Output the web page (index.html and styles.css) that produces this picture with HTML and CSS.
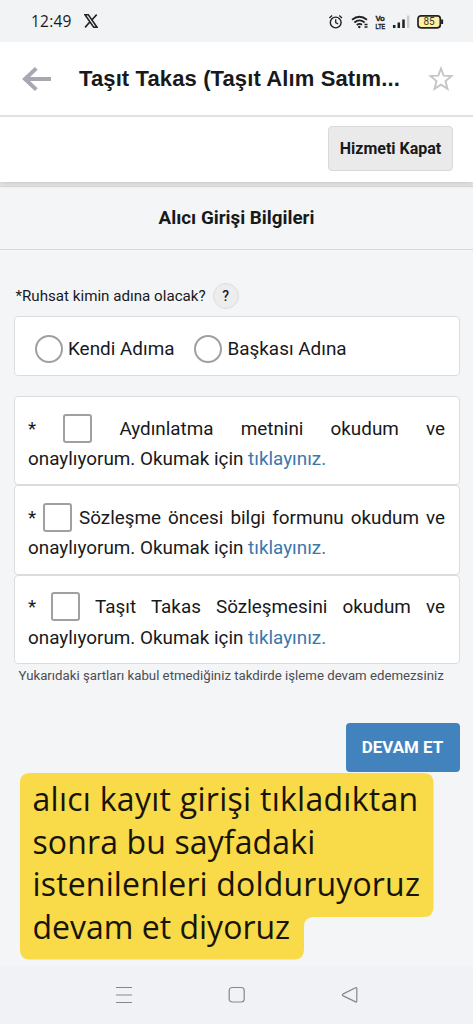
FILE: index.html
```html
<!DOCTYPE html>
<html lang="tr">
<head>
<meta charset="utf-8">
<meta name="viewport" content="width=device-width">
<title>Taşıt Takas</title>
<link rel="stylesheet" href="styles.css">
</head>
<body>
<div class="screen">
  <div class="status">
    <span class="clock">12:49</span>
    <svg class="x-logo" width="14" height="14" viewBox="0 0 14 14" fill="none" stroke="#222"><path d="M1 .8h3.3l8.7 12.400H9.700z" stroke-width="1.500"/><path d="M12.700.6 7.800 6M6 7.800 1.100 13.400" stroke-width="1.600"/></svg>
    <svg class="status-icons" width="116" height="18" viewBox="0 0 116 18" fill="none" stroke="#202124">
      <circle cx="7.700" cy="9.500" r="5.400" stroke-width="1.400"/>
      <path d="M7.700 6.200v3.500l2.500 1.300M1.400 5l2.700-2.400M14 5l-2.700-2.400" stroke-width="1.300"/>
      <path d="M24 6.800q7.500-6 15 0M26.400 9.500q5.100-4.200 10.200 0M28.800 12q2.700-2.200 5.200-.3" stroke-width="1.800"/>
      <circle cx="31.300" cy="14" r="1.200" fill="#202124" stroke="none"/>
      <path d="M36.500 11.500h3M36.500 14h3" stroke-width="1.500"/>
      <g fill="#202124" stroke="#202124" stroke-width=".3" class="volte"><text x="47.400" y="8" textLength="9.500" lengthAdjust="spacingAndGlyphs">Vo</text><text x="47.400" y="15.600" textLength="9.800" lengthAdjust="spacingAndGlyphs">LTE</text></g>
      <path d="M66.200 15v-3M70.800 15V9.500M75.500 15V6.500" stroke-width="2.500"/><path d="M80.200 15V2.500" stroke="#c9cacc" stroke-width="2.300"/>
      <rect x="90" y="2.800" width="22.300" height="12" rx="3" fill="#fff0a3" stroke-width="1.700"/>
      <path d="M114.100 6.500v4.500" stroke-width="2"/>
      <text x="101.100" y="12.400" text-anchor="middle" fill="#383725" stroke="none" class="battery">85</text>
    </svg>
  </div>
  <header class="header">
    <svg class="back" width="30" height="26" viewBox="0 0 30 26" fill="none" stroke="#aaa7b2" stroke-width="4"><path d="M29 13H3M14.300 2.400 3 13l11.300 10.600"/></svg>
    <h1><span>Taşıt Takas (Taşıt Alım Satım...</span></h1>
    <svg class="star" width="26" height="26" viewBox="0 0 26 26" fill="none" stroke="#c5c6c8" stroke-width="1.900"><path d="m13 2.500 2.700 7.200 7.900.4-6.100 5 2 7.800-6.500-4.300-6.500 4.300 2-7.800-6.100-5 7.900-.4z"/></svg>
  </header>
  <div class="toolbar"><button class="close"><span>Hizmeti Kapat</span></button></div>
  <h2 class="section-title"><span>Alıcı Girişi Bilgileri</span></h2>
  <main class="form">
    <div class="question"><span class="question-text">*Ruhsat kimin adına olacak?</span><span class="help">?</span></div>
    <div class="card options">
      <label class="option first"><i class="radio"></i><span>Kendi Adıma</span></label>
      <label class="option"><i class="radio"></i><span>Başkası Adına</span></label>
    </div>
    <div class="agreements">
      <div class="card agreement"><p class="justified">* <i class="checkbox"></i> Aydınlatma metnini okudum ve</p><p><span>onaylıyorum. Okumak için <a>tıklayınız.</a></span></p></div>
      <div class="card agreement"><p class="justified">* <i class="checkbox"></i> Sözleşme öncesi bilgi formunu okudum ve</p><p><span>onaylıyorum. Okumak için <a>tıklayınız.</a></span></p></div>
      <div class="card agreement"><p class="justified">* <i class="checkbox"></i> Taşıt Takas Sözleşmesini okudum ve</p><p><span>onaylıyorum. Okumak için <a>tıklayınız.</a></span></p></div>
    </div>
    <p class="note"><span>Yukarıdaki şartları kabul etmediğiniz takdirde işleme devam edemezsiniz</span></p>
    <button class="continue"><span>DEVAM ET</span></button>
  </main>
  <div class="callout">
    <svg class="callout-shape" width="414" height="188" viewBox="0 0 414 188"><path fill="#f9da49" d="M10 0H403.500q10 0 10 10V134q0 10-10 10H294q-10 0-10 10v22.500q0 10-10 10H10q-10 0-10-10V10Q0 0 10 0z"/></svg>
    <div class="callout-text">
      <div><span class="l1">alıcı kayıt girişi tıkladıktan</span></div>
      <div><span class="l2">sonra bu sayfadaki</span></div>
      <div><span class="l3">istenilenleri dolduruyoruz</span></div>
      <div><span class="l4">devam et diyoruz</span></div>
    </div>
  </div>
  <nav class="nav">
    <svg width="18" height="18" viewBox="0 0 18 18" stroke="#858789"><path d="M1 1.500h16M1 9h16M1 16.500h16" stroke-width="1.200"/></svg>
    <svg width="18" height="18" viewBox="0 0 18 18" fill="none" stroke="#858789" stroke-width="1.200"><rect x="1.200" y="1.500" width="15" height="14.500" rx="3"/></svg>
    <svg width="18" height="18" viewBox="0 0 18 18" fill="none" stroke="#858789" stroke-width="1.200"><path d="M14.600 1.800 2.200 7.900q-1.800 1 0 2l12.400 6q1.200.5 1.200-.8V2.500q0-1.200-1.200-.7z"/></svg>
  </nav>
</div>
</body>
</html>
```
FILE: styles.css
```css
* { box-sizing: border-box; }
body { margin: 0; background: #f4f5f7; color: #18191b; font-family: Roboto, sans-serif; }
h1, h2, p { margin: 0; }
button { font-family: inherit; padding: 0; }
.screen { position: relative; width: 473px; height: 1024px; display: flex; flex-direction: column; overflow: hidden; }
.status { height: 42px; flex: none; background: #f2f3f5; display: flex; align-items: center; padding: 0 29px 0 31px; }
.clock { font: 15.500px "Open Sans", sans-serif; letter-spacing: .2px; }
.x-logo { margin-left: 12px; }
.status-icons { margin-left: auto; margin-top: 2px; }
.volte { font: bold 8px "Liberation Sans", sans-serif; }
.battery { font: 10px Roboto, sans-serif; }
.header { height: 75px; flex: none; background: #fff; border-bottom: 2px solid #e3e4e6; display: flex; align-items: center; padding: 0 19px 0 22px; }
.back { flex: none; }
.header h1 { flex: 1; margin-left: 27px; font: bold 22px/26px "Liberation Sans", sans-serif; letter-spacing: .12px; white-space: nowrap; }
.toolbar { height: 65px; flex: none; background: #fff; display: flex; justify-content: flex-end; padding: 9px 20px 0; box-shadow: 0 2px 5px #ccc; position: relative; }
.close { width: 125px; height: 45px; border: 1px solid #d9d9d9; border-radius: 4px; background: #eaeaea; font-size: 16px; font-weight: 700; color: #18191b; }
.section-title { height: 68px; flex: none; padding-top: 4px; border-bottom: 1px solid #d7d9db; display: flex; align-items: center; justify-content: center; font-size: 18.800px; font-weight: 700; background: linear-gradient(#e6e7e8 0 4px, #d3d4d5 4px 5px, #f4f5f7 5px); }
.form { padding: 32px 13.500px 0 13.500px; display: flex; flex-direction: column; }
.question { height: 27px; display: flex; align-items: center; gap: 7px; padding-left: 2px; font-size: 15.150px; }
.help { width: 26px; height: 26px; border: 1px solid #dcddde; border-radius: 50%; background: #ededee; text-align: center; line-height: 24px; font-size: 14px; font-weight: 500; }
.card { background: #fff; border: 1px solid #dadcde; border-radius: 4px; }
.options { height: 60px; margin-top: 7px; display: flex; align-items: center; padding: 5px 0 0 20px; font-size: 18.900px; }
.option { display: flex; align-items: center; gap: 5.500px; white-space: nowrap; }
.option.first { width: 159.500px; }
.radio { width: 28px; height: 28px; flex: none; border: 2px solid #a0a0a0; border-radius: 50%; }
.agreements { margin-top: 20px; display: flex; flex-direction: column; }
.agreement { height: 89.300px; padding: 16.500px 13.500px 0 13.500px; font-size: 18.880px; line-height: 30px; }
.agreement p { height: 30.500px; white-space: nowrap; }
.agreement .justified { text-align: justify; text-align-last: justify; white-space: normal; }
.checkbox { display: inline-block; width: 29px; height: 29px; border: 2px solid #a0a0a0; border-radius: 3px; vertical-align: 0; margin: -8px 0; }
.agreement a { color: #3b77aa; }
.note { padding: 3px 0 0 5px; height: 21px; font-size: 13.220px; line-height: 18px; color: #4b4d50; white-space: nowrap; }
.continue { align-self: flex-end; width: 114px; height: 49px; margin-top: 38px; border: 0; border-radius: 4px; background: #4283bd; color: #fff; font-size: 16.900px; font-weight: 700; }
.callout { position: absolute; left: 19.500px; top: 773px; }
.callout-shape { display: block; }
.callout-text { position: absolute; inset: 5px 0 0 13px; font: 32px/42.500px "Open Sans", sans-serif; white-space: nowrap; color: #171507; }
.l1 { letter-spacing: .27px; }
.l2 { letter-spacing: .12px; }
.l3 { letter-spacing: .16px; }
.nav { height: 58px; margin-top: auto; background: #f1f2f5; display: flex; justify-content: space-between; padding: 20px 114px 0 115px; }
```
